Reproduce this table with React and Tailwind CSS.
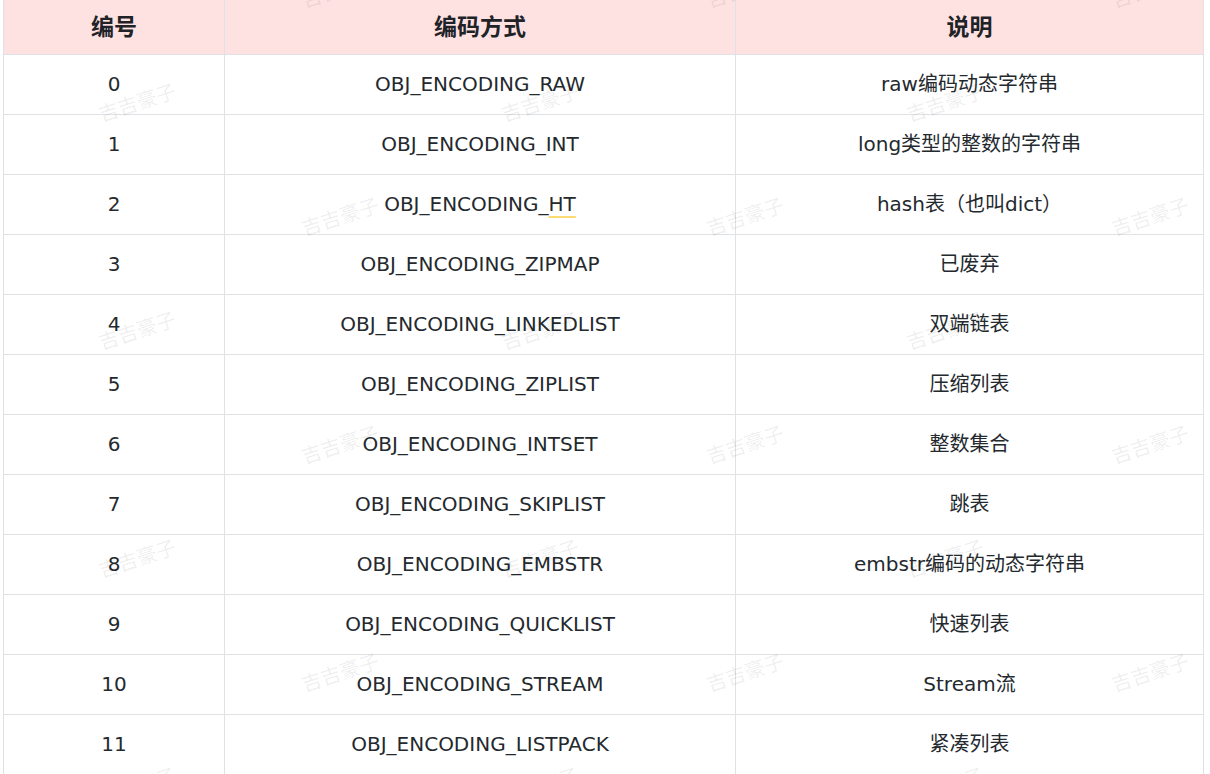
import React from 'react'

const rows = [
    ['0', 'OBJ_ENCODING_RAW', 'raw编码动态字符串'],
    ['1', 'OBJ_ENCODING_INT', 'long类型的整数的字符串'],
    ['2', 'OBJ_ENCODING_HT', 'hash表（也叫dict）'],
    ['3', 'OBJ_ENCODING_ZIPMAP', '已废弃'],
    ['4', 'OBJ_ENCODING_LINKEDLIST', '双端链表'],
    ['5', 'OBJ_ENCODING_ZIPLIST', '压缩列表'],
    ['6', 'OBJ_ENCODING_INTSET', '整数集合'],
    ['7', 'OBJ_ENCODING_SKIPLIST', '跳表'],
    ['8', 'OBJ_ENCODING_EMBSTR', 'embstr编码的动态字符串'],
    ['9', 'OBJ_ENCODING_QUICKLIST', '快速列表'],
    ['10', 'OBJ_ENCODING_STREAM', 'Stream流'],
    ['11', 'OBJ_ENCODING_LISTPACK', '紧凑列表'],
]

// watermark centres, staggered rows
const marks = []
for (let r = 0; r < 8; r++) {
    const y = -12 + r * 114
    const xs = r % 2 === 1 ? [137, 540, 945] : [340, 745, 1150]
    xs.forEach((x) => marks.push([x, y]))
}

export default function App() {
    const th = "border-x border-[#dfe2e5] font-bold text-center h-[54px] text-[23px] text-[#1f2328]"
    const td = "border border-[#dfe2e5] text-center h-[60px] text-[20px] text-[#24292e]"

    return (
        <div className="relative w-[1210px] h-[774px] overflow-hidden bg-white" style={{ fontFamily: '"DejaVu Sans", "Noto Sans CJK SC", sans-serif' }}>
            <table className="ml-[3px] w-[1200px] border-collapse table-fixed">
                <colgroup>
                    <col className="w-[221px]" />
                    <col className="w-[511px]" />
                    <col className="w-[468px]" />
                </colgroup>
                <thead>
                    <tr className="bg-[#fee2e2]">
                        <th className={th}>编号</th>
                        <th className={th}>编码方式</th>
                        <th className={th}>说明</th>
                    </tr>
                </thead>
                <tbody>
                    {rows.map((row) => (
                        <tr key={row[0]}>
                            <td className={td}>{row[0]}</td>
                            <td className={td}>
                                {row[1] === 'OBJ_ENCODING_HT' ? (
                                    <>OBJ_ENCODING_<span className="underline decoration-[#fcdc72] decoration-2 underline-offset-[5px]">HT</span></>
                                ) : row[1]}
                            </td>
                            <td className={td}>{row[2]}</td>
                        </tr>
                    ))}
                </tbody>
            </table>

            {/* watermark */}
            {marks.map(([x, y], i) => (
                <span
                    key={i}
                    className="absolute pointer-events-none select-none text-[20px] text-black/[0.08] -rotate-[18deg] whitespace-nowrap -translate-x-1/2 -translate-y-1/2"
                    style={{ left: x, top: y, fontFamily: '"Noto Sans CJK SC", sans-serif' }}
                >
                    吉吉豪子
                </span>
            ))}
        </div>
    )
}
